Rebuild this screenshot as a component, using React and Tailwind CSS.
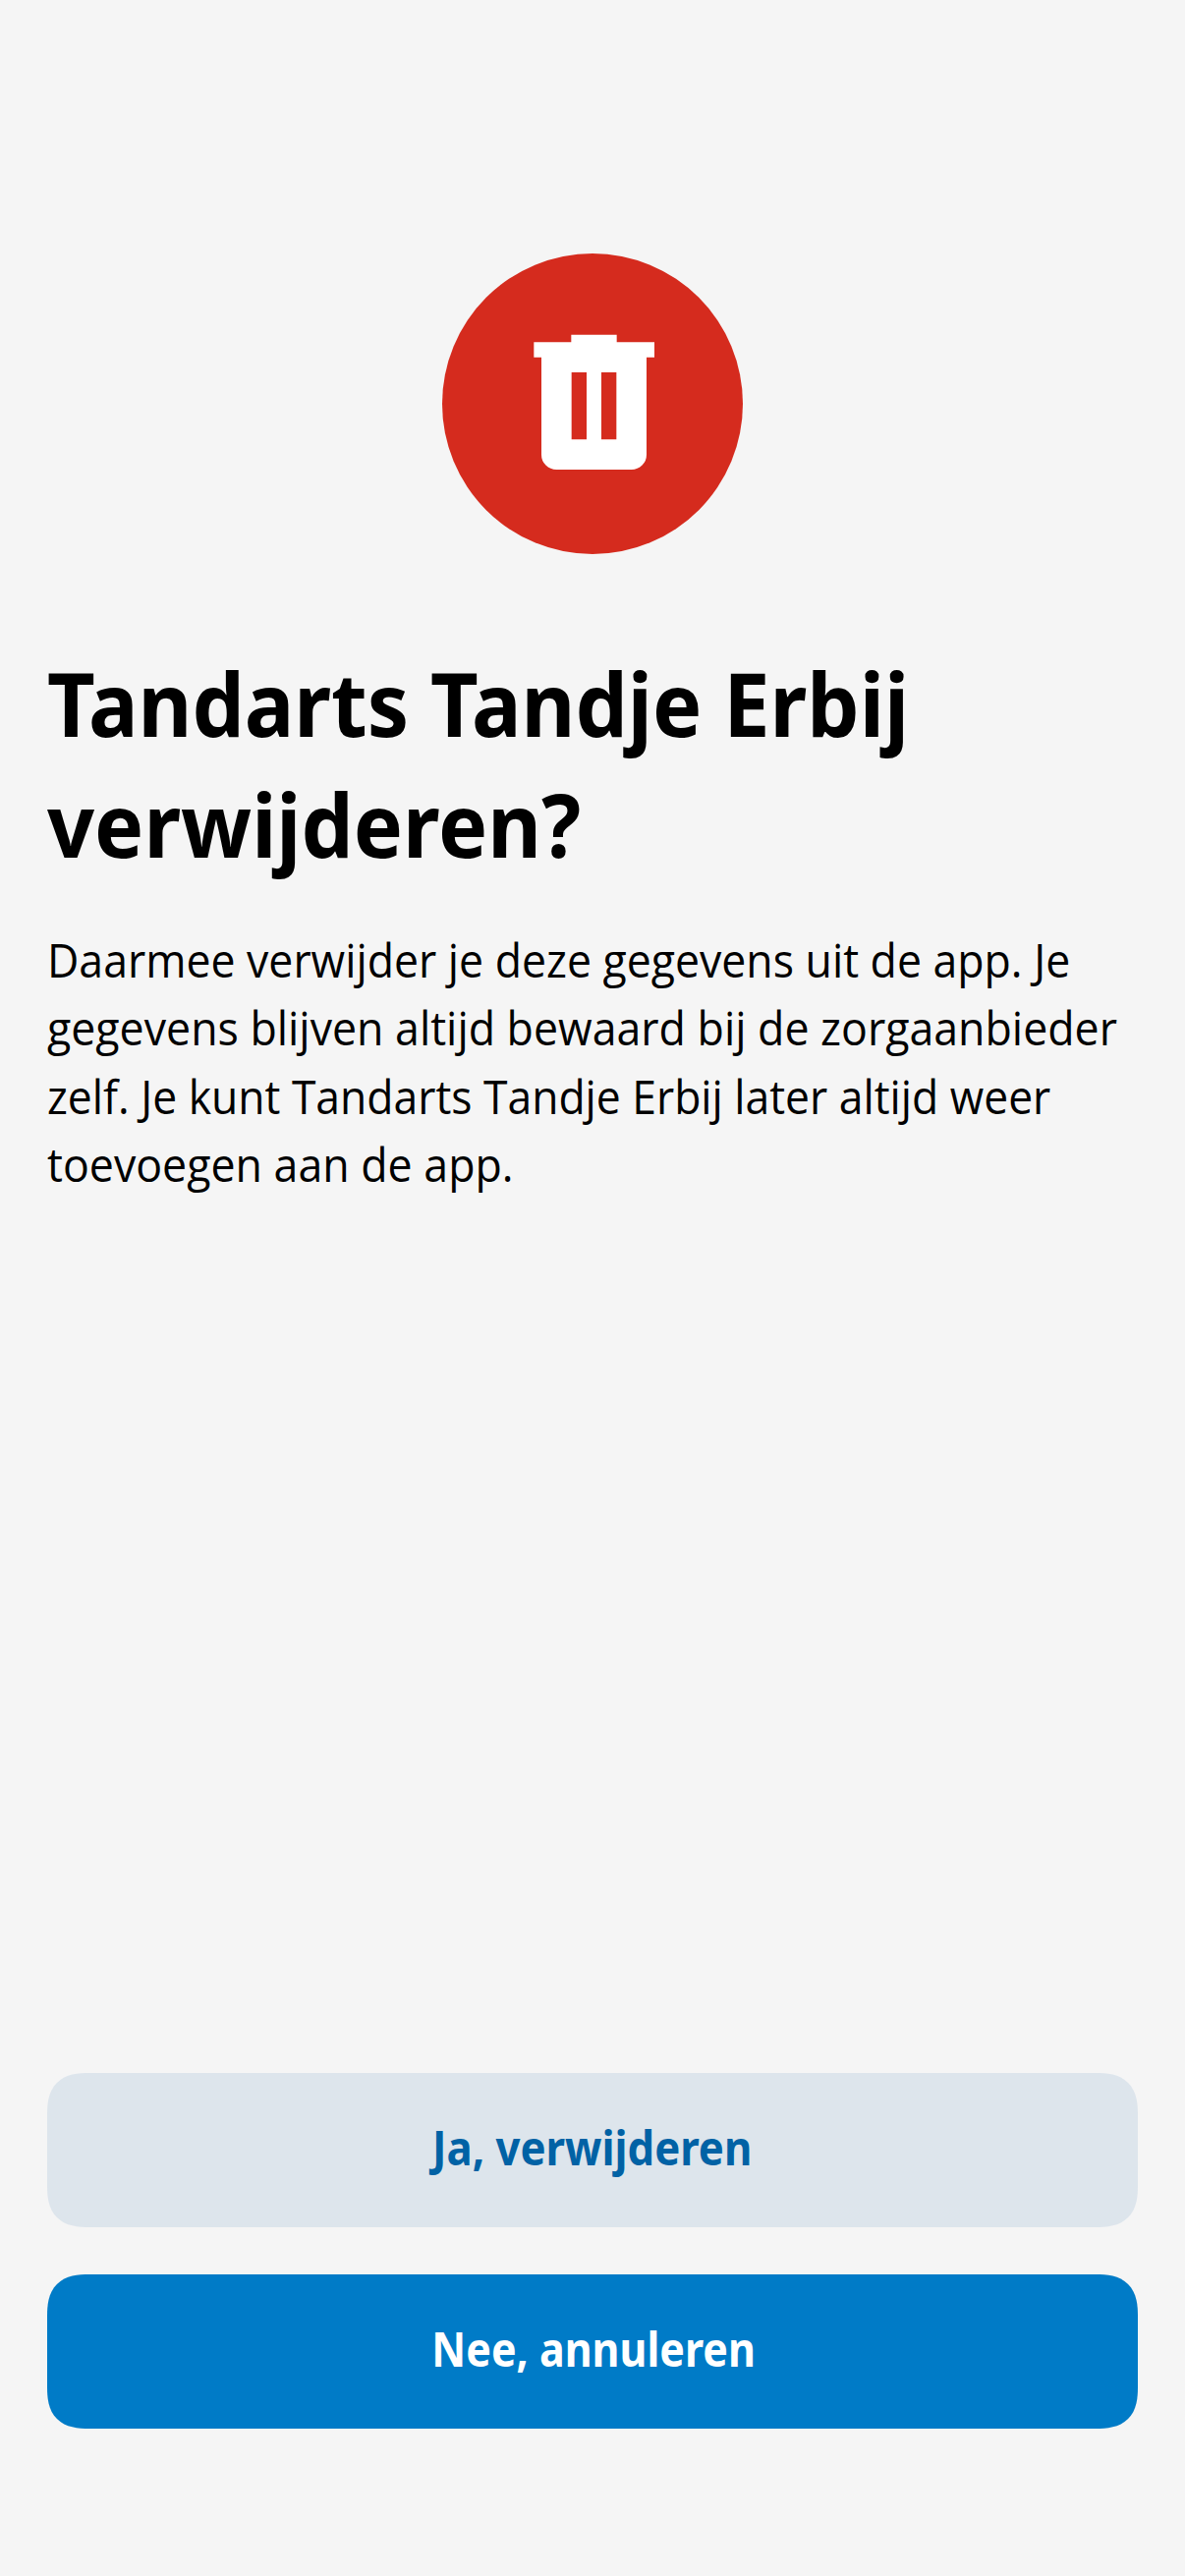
import React from 'react';

function TrashIcon() {
  return (
    <svg viewBox="0 0 918 918" className="size-[306px]" fill="#fff" aria-hidden="true">
      <path
        fillRule="evenodd"
        d="M394 248H533V271H648V317H624V614A46 46 0 0 1 578 660H349A46 46 0 0 1 303 614V317H280V271H394ZM395 363V568H441V363ZM486 363V568H532V363Z"
      />
    </svg>
  );
}

function Button({ children, className, label }) {
  return (
    <button
      type="button"
      className={`flex h-[157px] w-full items-center justify-center rounded-[43px] pb-[5px] text-[48px] font-bold leading-none [corner-shape:superellipse(1.4)] ${className}`}
    >
      <span className={`inline-block whitespace-nowrap ${label}`}>{children}</span>
    </button>
  );
}

export default function App() {
  return (
    <main className="flex h-[2622px] w-full flex-col bg-[#f5f5f5] px-12 pt-[258px] pb-[150px] font-['Noto_Sans',sans-serif] text-black">
      <div className="flex size-[306px] items-center justify-center self-center rounded-full bg-[#d52b1e]">
        <TrashIcon />
      </div>

      <h1 className="mt-[90px] whitespace-nowrap text-[90px] font-bold leading-[123px]">
        <span className="block origin-left scale-x-[0.938]">Tandarts Tandje Erbij</span>
        <span className="block origin-left scale-x-[0.936]">verwijderen?</span>
      </h1>

      <p className="mt-[42px] whitespace-nowrap font-['Open_Sans',sans-serif] text-[48px] leading-[69.4px]">
        <span className="block origin-left scale-x-[0.929]">Daarmee verwijder je deze gegevens uit de app. Je</span>
        <span className="block origin-left scale-x-[0.931]">gegevens blijven altijd bewaard bij de zorgaanbieder</span>
        <span className="block origin-left scale-x-[0.926]">zelf. Je kunt Tandarts Tandje Erbij later altijd weer</span>
        <span className="block origin-left scale-x-[0.931]">toevoegen aan de app.</span>
      </p>

      <div className="mt-auto flex flex-col gap-12">
        <Button className="bg-[#dde5ec] text-[#0162a5]" label="scale-x-[0.91]">Ja, verwijderen</Button>
        <Button className="bg-[#007bc7] text-white" label="translate-x-px scale-x-[0.895]">Nee, annuleren</Button>
      </div>
    </main>
  );
}
